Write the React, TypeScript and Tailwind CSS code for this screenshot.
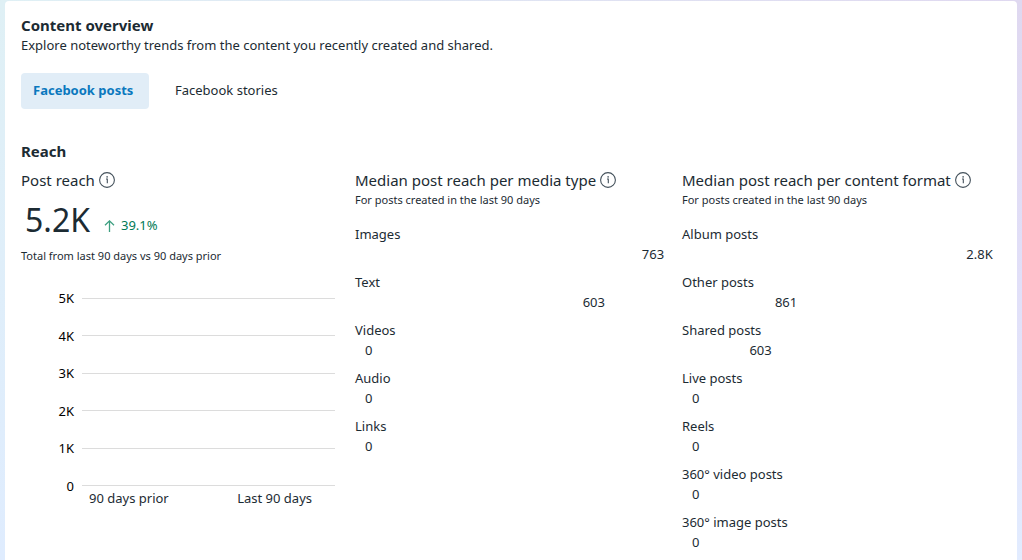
import { useState } from "react";

type Bar = { label: string; value: string; share: number };

const mediaTypes: Bar[] = [
	{ label: "Images", value: "763", share: 89 },
	{ label: "Text", value: "603", share: 70 },
	{ label: "Videos", value: "0", share: 0 },
	{ label: "Audio", value: "0", share: 0 },
	{ label: "Links", value: "0", share: 0 },
];

const contentFormats: Bar[] = [
	{ label: "Album posts", value: "2.8K", share: 86 },
	{ label: "Other posts", value: "861", share: 26 },
	{ label: "Shared posts", value: "603", share: 18 },
	{ label: "Live posts", value: "0", share: 0 },
	{ label: "Reels", value: "0", share: 0 },
	{ label: "360° video posts", value: "0", share: 0 },
	{ label: "360° image posts", value: "0", share: 0 },
];

const ticks = ["5K", "4K", "3K", "2K", "1K", "0"];
const tabs = ["Facebook posts", "Facebook stories"];

function InfoButton({ label }: { label: string }) {
	return (
		<button type="button" aria-label={label} className="shrink-0 text-[#44515b]">
			<svg viewBox="0 0 16 16" className="block size-4" fill="none" stroke="currentColor">
				<circle cx="8" cy="8" r="7.4" strokeWidth="1.1" />
				<path d="M7 7h1.3v4.2" strokeWidth="1.1" />
				<circle cx="8.1" cy="4.9" r=".8" fill="currentColor" stroke="none" />
			</svg>
		</button>
	);
}

function MetricTitle({ title }: { title: string }) {
	return (
		<div className="flex items-center gap-1">
			<h3 className="text-[15px] leading-5 whitespace-nowrap">{title}</h3>
			<InfoButton label={`About ${title}`} />
		</div>
	);
}

function BarList({ title, bars }: { title: string; bars: Bar[] }) {
	return (
		<section className="min-w-0">
			<MetricTitle title={title} />
			<p className="text-[11px] leading-5">For posts created in the last 90 days</p>
			<ul className="mt-3.5 flex flex-col gap-2">
				{bars.map((bar) => (
					<li key={bar.label} className="text-[13px] leading-5">
						<div>{bar.label}</div>
						<div className="flex">
							<div style={{ width: `${bar.share}%` }}></div>
							<span className="pl-2.5">{bar.value}</span>
						</div>
					</li>
				))}
			</ul>
		</section>
	);
}

export default function App() {
	const [active, setActive] = useState(tabs[0]);

	return (
		<div className="min-h-screen flex bg-linear-to-r from-[#dff0f5] to-[#dfd8f0] font-['Noto_Sans',sans-serif] text-[#1c2b33]">
			<div className="w-[5px] bg-linear-to-b from-[#dff0f5] to-[#dfecfe]"></div>
			<main className="flex-1 min-w-0 mt-px rounded-t bg-white px-4 pt-3.5">
				<h1 className="text-[15px] leading-5 font-bold">Content overview</h1>
				<p className="text-[13px] leading-5">
					Explore noteworthy trends from the content you recently created and shared.
				</p>

				{/* Post type tabs */}
				<div className="mt-[18px] flex gap-3.5" role="tablist">
					{tabs.map((tab) => (
						<button
							key={tab}
							type="button"
							role="tab"
							aria-selected={tab === active}
							onClick={() => setActive(tab)}
							className={
								tab === active
									? "h-9 min-w-32 rounded px-3 text-left text-[13px] font-bold bg-[#e1edf7] text-[#0a78be]"
									: "h-9 min-w-32 rounded px-3 text-left text-[13px]"
							}
						>
							{tab}
						</button>
					))}
				</div>

				<h2 className="mt-8 text-[15px] leading-5 font-bold">Reach</h2>

				<div className="mt-[9px] grid grid-cols-[318fr_311fr_319fr] gap-x-4">
					<section className="min-w-0 pr-1">
						<MetricTitle title="Post reach" />
						<div className="mt-2.5 pl-1 flex items-baseline gap-3.5">
							<span className="text-[32px] leading-10">5.2K</span>
							<span className="flex items-center gap-1.5 text-[13px] text-[#007a56]">
								<svg viewBox="0 0 11 12" className="w-[11px] h-3" fill="none" stroke="#3d9f80" strokeWidth="1.3">
									<path d="M5.5 12V1M1 5.3 5.5.9 10 5.3" />
								</svg>
								39.1%
							</span>
						</div>
						<p className="mt-1.5 text-[11px] leading-5">Total from last 90 days vs 90 days prior</p>

						{/* Comparison chart */}
						<div className="mt-[22px] h-52 flex flex-col justify-between text-[13px] text-black">
							{ticks.map((tick) => (
								<div key={tick} className="flex items-center gap-2 h-5">
									<span className="w-[53px] text-right leading-5">{tick}</span>
									<div className="flex-1 h-px bg-[#dcdcdc]"></div>
								</div>
							))}
						</div>
						<div className="-mt-2 flex justify-between pl-[68px] pr-[23px] text-[13px] leading-5">
							<span>90 days prior</span>
							<span>Last 90 days</span>
						</div>
					</section>

					<BarList title="Median post reach per media type" bars={mediaTypes} />
					<BarList title="Median post reach per content format" bars={contentFormats} />
				</div>
			</main>
			<div className="w-[5px] bg-linear-to-b from-[#dfd8f0] via-[#e1dff8] to-[#e2ecff]"></div>
		</div>
	);
}
